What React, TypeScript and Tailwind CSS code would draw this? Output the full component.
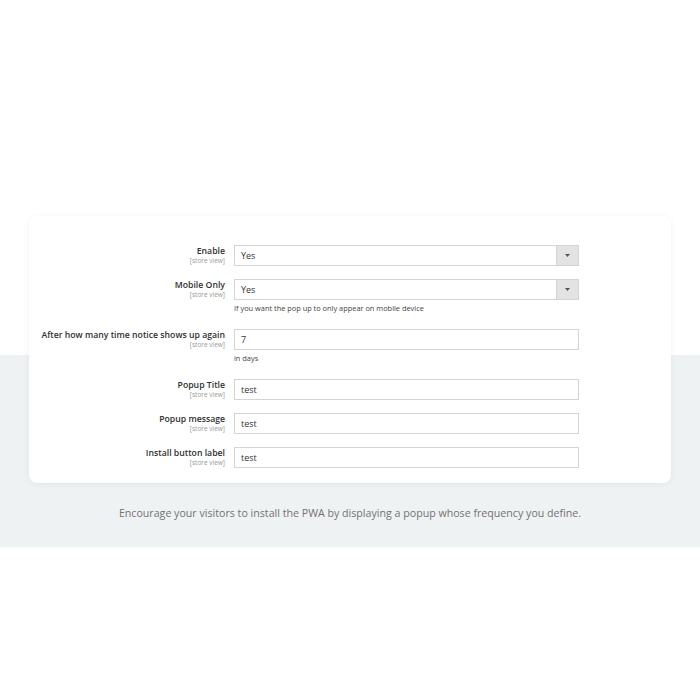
const FIELDS: Array<{
  label: string
  value: string
  select?: boolean
  note?: string
}> = [
  { label: "Enable", value: "Yes", select: true },
  {
    label: "Mobile Only",
    value: "Yes",
    select: true,
    note: "If you want the pop up to only appear on mobile device"
  },
  { label: "After how many time notice shows up again", value: "7", note: "in days" },
  { label: "Popup Title", value: "test" },
  { label: "Popup message", value: "test" },
  { label: "Install button label", value: "test" }
]

export default function App() {
  return (
    <div className="min-h-[700px] bg-white font-['Open_Sans',sans-serif]">
      <div className="h-[216px]" />
      <section className="bg-[linear-gradient(to_bottom,#ffffff_139px,#eff2f3_139px)] px-[29px] pb-[20px]">
        <div className="flex h-[267px] flex-col gap-[13px] rounded-[8px] bg-white pt-[29px] shadow-[0_1px_6px_rgba(0,0,0,0.06)]">
          {FIELDS.map((field) => (
            <FieldRow key={field.label} {...field} />
          ))}
        </div>
        <p className="mt-[22px] text-center text-[10.65px] leading-[16px] text-[#727272]">
          Encourage your visitors to install the PWA by displaying a popup whose frequency you define.
        </p>
        <div className="h-[6px]" />
      </section>
    </div>
  )
}

function FieldRow({
  label,
  value,
  select,
  note
}: {
  label: string
  value: string
  select?: boolean
  note?: string
}) {
  return (
    <div className="flex gap-[9px]">
      <div className="w-[196px] pt-[1px] text-right">
        <p className="text-[8.7px] font-semibold leading-[11px] text-[#303030]">{label}</p>
        <p className="text-[6.5px] leading-[8px] text-[#999]">[store view]</p>
      </div>
      <div className="w-[345px]">
        <div className="flex h-[21px] items-stretch border border-[#d4d4d4] bg-white">
          <span className="flex flex-1 items-center pl-[6px] text-[9px] text-[#333]">{value}</span>
          {select && (
            <span className="flex w-[22px] items-center justify-center border-l border-[#d4d4d4] bg-[#e3e3e3]">
              <svg width="5" height="3" viewBox="0 0 5 3">
                <path d="M0 0h5L2.5 3z" fill="#555" />
              </svg>
            </span>
          )}
        </div>
        {note && (
          <p className="mt-[1px] text-[7.4px] leading-[15px] text-[#444]">{note}</p>
        )}
      </div>
    </div>
  )
}
